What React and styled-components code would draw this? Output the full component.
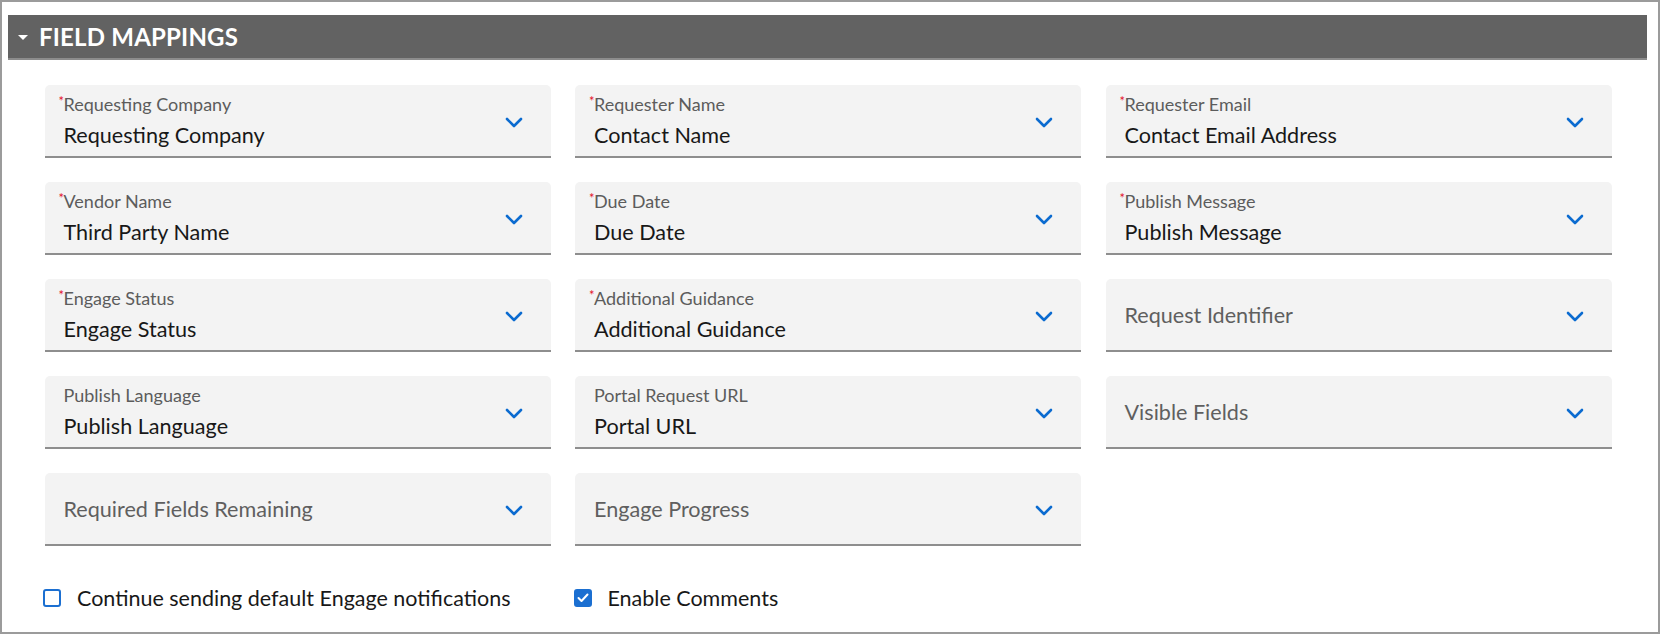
import React from 'react';
import styled, { createGlobalStyle } from 'styled-components';

const GlobalStyle = createGlobalStyle`
  html, body {
    margin: 0;
    padding: 0;
    background: #ffffff;
    font-family: Lato, "Noto Sans", sans-serif;
  }
  * {
    box-sizing: border-box;
  }
`;

const Frame = styled.div`
  width: 1660px;
  height: 634px;
  border: 2px solid #9b9b9b;
  padding: 13px 11px 0 6px;
  background: #fff;
`;

const Header = styled.div`
  height: 45px;
  display: flex;
  align-items: center;
  gap: 11px;
  padding-left: 10px;
  background: #626262;
  border-bottom: 2px solid #8c8c8c;
  color: #fff;
`;

const Caret = styled.span`
  width: 0;
  height: 0;
  border-left: 5.5px solid transparent;
  border-right: 5.5px solid transparent;
  border-top: 5px solid #fff;
  margin-top: 2px;
`;

const Title = styled.h2`
  margin: 0;
  font-size: 24px;
  font-weight: 700;
  letter-spacing: 0.2px;
`;

const Grid = styled.div`
  display: grid;
  grid-template-columns: repeat(3, 506px);
  column-gap: 24.5px;
  row-gap: 24px;
  padding: 25px 0 0 36.5px;
`;

const Field = styled.div`
  height: 73px;
  display: flex;
  align-items: center;
  padding: 0 28px 0 19px;
  background: #f3f3f3;
  border-radius: 5px 5px 0 0;
  border-bottom: 2px solid #8e8e8e;
`;

const FieldText = styled.div`
  flex: 1;
  display: flex;
  flex-direction: column;
  gap: 7px;
  min-width: 0;
`;

const Label = styled.div`
  font-size: 18px;
  line-height: 21px;
  color: #5c5c5c;
`;

const Required = styled.span`
  display: inline-block;
  width: 5px;
  margin-left: -5px;
  font-size: 13px;
  color: #e3112b;
  vertical-align: top;
  line-height: 14px;
`;

const Value = styled.div`
  font-size: 21.6px;
  line-height: 26px;
  color: ${(p) => (p.$placeholder ? '#5f5f5f' : '#181818')};
`;

const Chevron = styled.svg`
  width: 18px;
  height: 11px;
  flex-shrink: 0;
  margin-top: 3px;
`;

const Options = styled.div`
  display: grid;
  grid-template-columns: repeat(3, 506px);
  column-gap: 24.5px;
  padding: 39px 0 0 35px;
`;

const Check = styled.label`
  display: flex;
  align-items: center;
  gap: 16px;
  font-size: 21.5px;
  color: #181818;
`;

const Box = styled.span`
  width: 18px;
  height: 18px;
  border-radius: 3px;
  border: 2px solid #1b6fd1;
  background: ${(p) => (p.$checked ? '#1b6fd1' : '#fff')};
  display: flex;
  align-items: center;
  justify-content: center;
`;

const fields = [
  { label: 'Requesting Company', value: 'Requesting Company', required: true },
  { label: 'Requester Name', value: 'Contact Name', required: true },
  { label: 'Requester Email', value: 'Contact Email Address', required: true },
  { label: 'Vendor Name', value: 'Third Party Name', required: true },
  { label: 'Due Date', value: 'Due Date', required: true },
  { label: 'Publish Message', value: 'Publish Message', required: true },
  { label: 'Engage Status', value: 'Engage Status', required: true },
  { label: 'Additional Guidance', value: 'Additional Guidance', required: true },
  { placeholder: 'Request Identifier' },
  { label: 'Publish Language', value: 'Publish Language' },
  { label: 'Portal Request URL', value: 'Portal URL' },
  { placeholder: 'Visible Fields' },
  { placeholder: 'Required Fields Remaining' },
  { placeholder: 'Engage Progress' },
];

const ChevronIcon = () => (
  <Chevron viewBox="0 0 18 11">
    <path d="M2 2 L9 9 L16 2" fill="none" stroke="#0b6bd0" strokeWidth="2.6" strokeLinecap="round" strokeLinejoin="round" />
  </Chevron>
);

const MappingField = ({ label, value, required, placeholder }) => (
  <Field>
    <FieldText>
      {placeholder ? (
        <Value $placeholder>{placeholder}</Value>
      ) : (
        <>
          <Label>
            {required && <Required>*</Required>}
            {label}
          </Label>
          <Value>{value}</Value>
        </>
      )}
    </FieldText>
    <ChevronIcon />
  </Field>
);

const App = () => {
  return (
    <>
      <GlobalStyle />
      <Frame>
        <Header>
          <Caret />
          <Title>FIELD MAPPINGS</Title>
        </Header>
        <Grid>
          {fields.map((f, i) => (
            <MappingField key={i} {...f} />
          ))}
        </Grid>
        <Options>
          <Check>
            <Box />
            Continue sending default Engage notifications
          </Check>
          <Check>
            <Box $checked>
              <svg width="12" height="10" viewBox="0 0 12 10">
                <path d="M1.5 5 L4.5 8 L10.5 1.5" fill="none" stroke="#fff" strokeWidth="2" strokeLinecap="round" strokeLinejoin="round" />
              </svg>
            </Box>
            Enable Comments
          </Check>
        </Options>
      </Frame>
    </>
  );
};

export default App;
